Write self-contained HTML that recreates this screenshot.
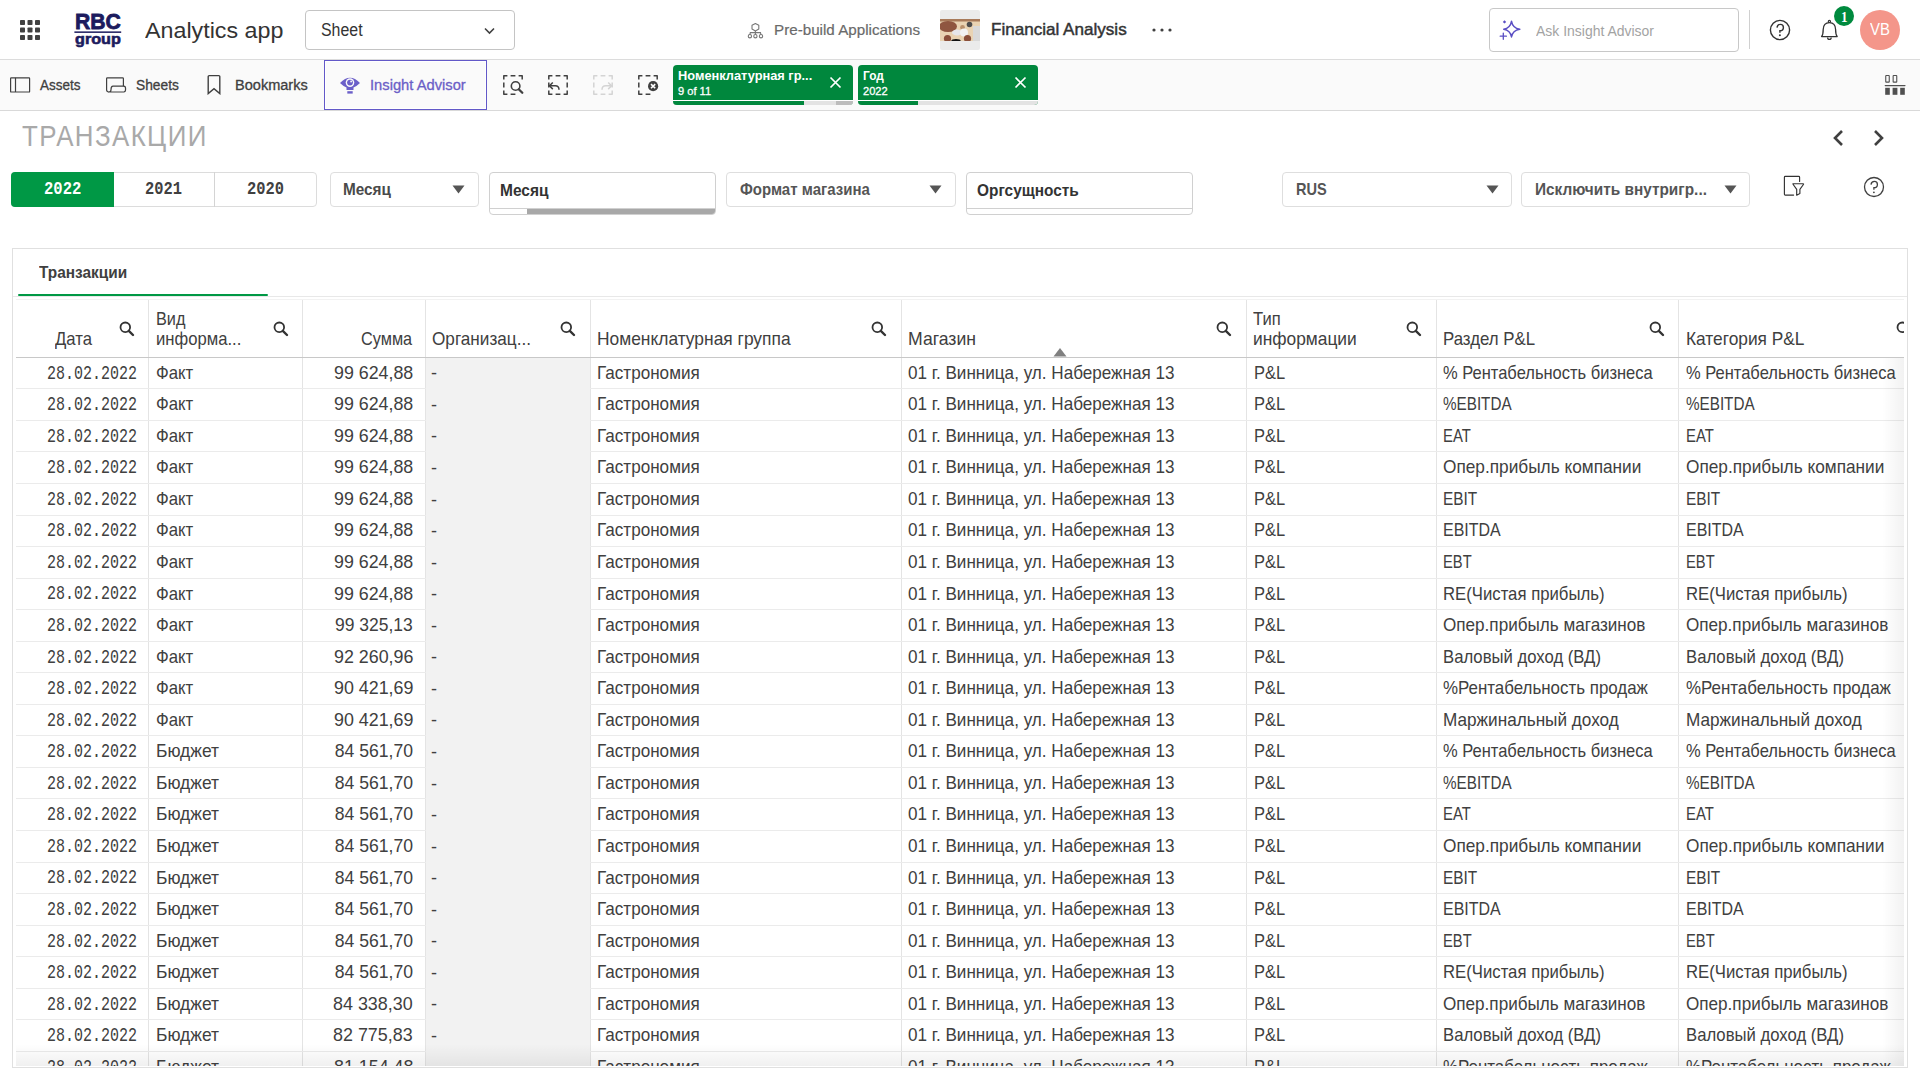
<!DOCTYPE html>
<html><head><meta charset="utf-8"><title>Analytics app</title><style>
*{box-sizing:border-box;margin:0;padding:0}
html,body{width:1920px;height:1080px;overflow:hidden;background:#fff;font-family:"Liberation Sans",sans-serif;color:#404040}
.a{position:absolute}
.t{position:absolute;line-height:1;white-space:nowrap}
</style></head><body>

<div class="a" style="left:0px;top:59px;width:1920px;height:1px;background:#dcdcdc"></div>
<svg class="a" style="left:20px;top:20px;" width="20" height="20" viewBox="0 0 20 20"><rect x="0.0" y="0.0" width="5" height="5" rx="0.8" fill="#404040"/><rect x="0.0" y="7.5" width="5" height="5" rx="0.8" fill="#404040"/><rect x="0.0" y="15.0" width="5" height="5" rx="0.8" fill="#404040"/><rect x="7.5" y="0.0" width="5" height="5" rx="0.8" fill="#404040"/><rect x="7.5" y="7.5" width="5" height="5" rx="0.8" fill="#404040"/><rect x="7.5" y="15.0" width="5" height="5" rx="0.8" fill="#404040"/><rect x="15.0" y="0.0" width="5" height="5" rx="0.8" fill="#404040"/><rect x="15.0" y="7.5" width="5" height="5" rx="0.8" fill="#404040"/><rect x="15.0" y="15.0" width="5" height="5" rx="0.8" fill="#404040"/></svg>
<div class="t" style="top:10.94px;font-size:21.22px;color:#1c1b5e;font-weight:bold;left:74.80px;transform:scaleX(0.9957);transform-origin:0 0;-webkit-text-stroke:0.8px #1c1b5e;">RBC</div>
<svg class="a" style="left:74px;top:30px;" width="48" height="4" viewBox="0 0 48 4"><rect x="0.4" y="1.4" width="46.8" height="1.5" fill="#1c1b5e"/></svg>
<div class="t" style="top:30.53px;font-size:15.20px;color:#1c1b5e;font-weight:bold;left:74.80px;transform:scaleX(1.0651);transform-origin:0 0;-webkit-text-stroke:0.6px #1c1b5e;">group</div>
<div class="t" style="top:20.25px;font-size:22.38px;color:#333;left:145.00px;transform:scaleX(1.0404);transform-origin:0 0;">Analytics app</div>
<div class="a" style="left:305px;top:10px;width:210px;height:40px;border:1px solid #c4c4c4;border-radius:4px;background:#fff"></div>
<div class="t" style="top:20.94px;font-size:18.02px;color:#333;left:320.60px;transform:scaleX(0.8828);transform-origin:0 0;">Sheet</div>
<svg class="a" style="left:484px;top:27px;" width="11" height="8" viewBox="0 0 11 8"><path d="M1 1.5 L5.5 6 L10 1.5" fill="none" stroke="#404040" stroke-width="1.6"/></svg>
<svg class="a" style="left:747px;top:23px;" width="18" height="16" viewBox="0 0 18 16"><path d="M8.4 0.5 L11.8 2.3 V6 L8.4 7.9 L5 6 V2.3 Z" fill="none" stroke="#777" stroke-width="1.1" stroke-linejoin="round"/><path d="M2.9 11.6 L3.3 9.6 H13.5 L13.9 11.6 M8.4 7.9 V11.6" fill="none" stroke="#777" stroke-width="1.1"/><circle cx="2.9" cy="13.2" r="1.65" fill="none" stroke="#777" stroke-width="1.1"/><circle cx="8.4" cy="13.2" r="1.65" fill="none" stroke="#777" stroke-width="1.1"/><circle cx="14" cy="13.2" r="1.65" fill="none" stroke="#777" stroke-width="1.1"/></svg>
<div class="t" style="top:22.03px;font-size:15.55px;color:#6a6a6a;left:773.90px;transform:scaleX(0.9766);transform-origin:0 0;-webkit-text-stroke:0.2px #6a6a6a;">Pre-build Applications</div>
<div class="a" style="left:940px;top:10px;width:40px;height:40px;background:#ebebeb;border-radius:2px"></div>
<svg class="a" style="left:940px;top:19px;" width="40" height="22" viewBox="0 0 40 22"><rect width="40" height="22" fill="#e9d3b3"/><rect width="40" height="2.5" fill="#a87a5a"/><ellipse cx="8" cy="7.5" rx="9" ry="5.5" fill="#8f5640"/><ellipse cx="17" cy="13.5" rx="5" ry="3" fill="#e6e6ea"/><circle cx="22.5" cy="8.5" r="2.4" fill="#b8906c"/><ellipse cx="24" cy="13.5" rx="4" ry="4" fill="#f2f2f2"/><circle cx="29.5" cy="5.5" r="2.8" fill="#4d4d4d"/><rect x="33" y="7" width="7" height="15" fill="#d9d9d9"/><circle cx="7.5" cy="19.5" r="3.6" fill="#8a4f3a"/><circle cx="27.5" cy="19.5" r="3.6" fill="#8a4f3a"/><ellipse cx="16" cy="21.6" rx="4.6" ry="1.6" fill="#111"/></svg>
<div class="t" style="top:21.38px;font-size:17.15px;color:#333;left:991.00px;transform:scaleX(0.9958);transform-origin:0 0;-webkit-text-stroke:0.45px #333;">Financial Analysis</div>
<svg class="a" style="left:1151px;top:27px;" width="22" height="6" viewBox="0 0 22 6"><circle cx="3" cy="3" r="1.6" fill="#404040"/><circle cx="11" cy="3" r="1.6" fill="#404040"/><circle cx="19" cy="3" r="1.6" fill="#404040"/></svg>
<div class="a" style="left:1489px;top:8px;width:250px;height:44px;border:1px solid #c8c8c8;border-radius:4px;background:#fff"></div>
<svg class="a" style="left:1498px;top:19px;" width="24" height="22" viewBox="0 0 24 22"><path d="M13.5 2.2 Q14.6 9.2 21.8 10.3 Q14.6 11.4 13.5 18 Q12.4 11.4 5.7 10.3 Q12.4 9.2 13.5 2.2 Z" fill="none" stroke="#5b4fc4" stroke-width="1.4" stroke-linejoin="round"/><path d="M2.2 17.2 H8.4 M5.3 14.1 V20.3" stroke="#5b4fc4" stroke-width="1.3" stroke-linecap="round"/><path d="M6.5 1.2 L8.2 2.9 L6.5 4.6 L4.8 2.9 Z" fill="#5b4fc4"/></svg>
<div class="t" style="top:23.28px;font-size:15.26px;color:#a3a3a3;left:1536.00px;transform:scaleX(0.9156);transform-origin:0 0;">Ask Insight Advisor</div>
<div class="a" style="left:1749px;top:10px;width:1px;height:39px;background:#d0d0d0"></div>
<svg class="a" style="left:1769px;top:19px;" width="22" height="22" viewBox="0 0 22 22"><circle cx="11" cy="11" r="9.6" fill="none" stroke="#333" stroke-width="1.4"/><path d="M8 8.6 Q8.4 5.4 11.4 5.4 Q14.4 5.4 14.4 8.4 Q14.4 11.6 10.9 11.7 V13.8" fill="none" stroke="#333" stroke-width="1.4"/><circle cx="10.9" cy="16.3" r="1" fill="#333"/></svg>
<svg class="a" style="left:1820px;top:19px;" width="19" height="22" viewBox="0 0 19 22"><circle cx="9.4" cy="2.4" r="1.1" fill="none" stroke="#333" stroke-width="1.2"/><path d="M9.4 3.6 Q3.4 3.6 3.2 10.5 Q3.2 15.5 1.6 17.6 H17.2 Q15.6 15.5 15.6 10.5 Q15.4 3.6 9.4 3.6 Z" fill="none" stroke="#333" stroke-width="1.3" stroke-linejoin="round"/><path d="M7.6 18.4 Q7.6 20.4 9.4 20.4 Q11.2 20.4 11.2 18.4" fill="none" stroke="#333" stroke-width="1.2"/></svg>
<div class="a" style="left:1834px;top:6px;width:20px;height:20px;background:#008a3e;border-radius:50%"></div>
<div class="t" style="top:9.72px;font-size:14.39px;color:#fff;font-weight:bold;font-family:'Liberation Serif',serif;left:1840.70px;transform:scaleX(0.9103);transform-origin:0 0;">1</div>
<div class="a" style="left:1860px;top:10px;width:40px;height:40px;background:#f4968a;border-radius:50%"></div>
<div class="t" style="top:21.69px;font-size:15.84px;color:#fff;left:1870.00px;transform:scaleX(0.9420);transform-origin:0 0;">VB</div>
<div class="a" style="left:0px;top:60px;width:1920px;height:50px;background:#fafafa"></div>
<div class="a" style="left:0px;top:110px;width:1920px;height:1px;background:#d9d9d9"></div>
<svg class="a" style="left:9px;top:76px;" width="22" height="18" viewBox="0 0 22 18"><rect x="1.6" y="1.8" width="19" height="14.2" rx="0.6" fill="none" stroke="#404040" stroke-width="1.2"/><path d="M6.5 1.8 V16" stroke="#404040" stroke-width="1.2"/></svg>
<div class="t" style="top:77.64px;font-size:14.24px;color:#404040;left:40.00px;transform:scaleX(0.9497);transform-origin:0 0;-webkit-text-stroke:0.3px #404040;">Assets</div>
<svg class="a" style="left:105px;top:76px;" width="22" height="18" viewBox="0 0 22 18"><path d="M3.8 16 Q1.6 16 1.6 13.8 V2.6 Q1.6 1.8 2.4 1.8 H17.6 Q18.4 1.8 18.4 2.6 V10.2" fill="none" stroke="#404040" stroke-width="1.2"/><path d="M3.8 16 Q6 16 6 13.8 Q6 10.2 8 10.2 H18.8 Q20.6 10.2 20.6 13 Q20.6 16 18.8 16 Z" fill="none" stroke="#404040" stroke-width="1.2" stroke-linejoin="round"/></svg>
<div class="t" style="top:77.64px;font-size:14.24px;color:#404040;left:136.00px;transform:scaleX(0.9668);transform-origin:0 0;-webkit-text-stroke:0.3px #404040;">Sheets</div>
<svg class="a" style="left:206px;top:74px;" width="16" height="21" viewBox="0 0 16 21"><path d="M2.2 19.6 V2.6 Q2.2 1.6 3.2 1.6 H12.8 Q13.8 1.6 13.8 2.6 V19.6 L8 14.6 Z" fill="none" stroke="#404040" stroke-width="1.4" stroke-linejoin="miter"/></svg>
<div class="t" style="top:77.64px;font-size:14.24px;color:#404040;left:234.70px;transform:scaleX(1.0218);transform-origin:0 0;-webkit-text-stroke:0.3px #404040;">Bookmarks</div>
<div class="a" style="left:324px;top:60px;width:163px;height:50px;border:1px solid #6258c8;box-shadow:inset 0 0 0 1px #fff;background:#fafafa"></div>
<svg class="a" style="left:339px;top:74px;" width="22" height="21" viewBox="0 0 22 21"><path d="M1 9 Q11 -1.5 21 9 Q18 12 14.5 13.6 V16 H7.5 V13.6 Q4 12 1 9 Z" fill="#6b5fc9"/><circle cx="11" cy="8.6" r="4.3" fill="#fafafa"/><circle cx="11" cy="8.6" r="2.9" fill="#6b5fc9"/><circle cx="12.1" cy="7.5" r="0.9" fill="#fafafa"/><rect x="8.3" y="17.2" width="5.4" height="2.4" fill="#6b5fc9"/></svg>
<div class="t" style="top:77.64px;font-size:14.24px;color:#6b5fc7;left:370.00px;transform:scaleX(1.0343);transform-origin:0 0;-webkit-text-stroke:0.3px #6b5fc7;">Insight Advisor</div>
<svg class="a" style="left:503px;top:75px;" width="22" height="22" viewBox="0 0 22 22"><path d="M0.8 4.4 V0.8 H4.4 M15.6 0.8 H19.2 V4.4 M4.4 19.2 H0.8 V15.6 M7.6 0.8 H12.4 M7.6 19.2 H12.4 M0.8 7.6 V12.4" fill="none" stroke="#404040" stroke-width="1.5" stroke-linecap="butt" stroke-linejoin="round"/><circle cx="12.6" cy="11" r="4.3" fill="none" stroke="#404040" stroke-width="1.6"/><path d="M15.7 14.2 L19.3 17.8" stroke="#404040" stroke-width="2.3" stroke-linecap="round"/></svg>
<svg class="a" style="left:548px;top:75px;" width="22" height="22" viewBox="0 0 22 22"><path d="M0.8 4.4 V0.8 H4.4 M15.6 0.8 H19.2 V4.4 M19.2 15.6 V19.2 H15.6 M4.4 19.2 H0.8 V15.6 M7.6 0.8 H12.4 M7.6 19.2 H12.4 M0.8 7.6 V12.4 M19.2 7.6 V12.4" fill="none" stroke="#404040" stroke-width="1.5" stroke-linecap="butt" stroke-linejoin="round"/><path d="M1.5 10.8 H7.3 Q11 10.8 11 14.8" fill="none" stroke="#404040" stroke-width="1.5"/><path d="M4.8 7.5 L1.5 10.8 L4.8 14.1" fill="none" stroke="#404040" stroke-width="1.5"/></svg>
<svg class="a" style="left:593px;top:75px;" width="22" height="22" viewBox="0 0 22 22"><path d="M0.8 4.4 V0.8 H4.4 M15.6 0.8 H19.2 V4.4 M19.2 15.6 V19.2 H15.6 M4.4 19.2 H0.8 V15.6 M7.6 0.8 H12.4 M7.6 19.2 H12.4 M0.8 7.6 V12.4 M19.2 7.6 V12.4" fill="none" stroke="#d4d4d4" stroke-width="1.5" stroke-linecap="butt" stroke-linejoin="round"/><path d="M18.5 10.8 H12.7 Q9 10.8 9 14.8" fill="none" stroke="#d4d4d4" stroke-width="1.5"/><path d="M15.2 7.5 L18.5 10.8 L15.2 14.1" fill="none" stroke="#d4d4d4" stroke-width="1.5"/></svg>
<svg class="a" style="left:638px;top:75px;" width="22" height="22" viewBox="0 0 22 22"><path d="M0.8 4.4 V0.8 H4.4 M15.6 0.8 H19.2 V4.4 M4.4 19.2 H0.8 V15.6 M7.6 0.8 H12.4 M7.6 19.2 H12.4 M0.8 7.6 V12.4" fill="none" stroke="#404040" stroke-width="1.5" stroke-linecap="butt" stroke-linejoin="round"/><circle cx="15.1" cy="11.2" r="5.1" fill="#404040"/><path d="M13 9.1 L17.2 13.3 M17.2 9.1 L13 13.3" stroke="#fff" stroke-width="1.6"/></svg>
<div class="a" style="left:673px;top:65px;width:180px;height:40px;background:#00873d;border-radius:4px;overflow:hidden"></div>
<div class="a" style="left:673px;top:101px;width:180px;height:4px;background:#e3e3e3;border-radius:0 0 4px 4px"></div>
<div class="a" style="left:836px;top:101px;width:17px;height:4px;background:#bdbdbd;border-radius:0 0 4px 0"></div>
<div class="a" style="left:673px;top:101px;width:131px;height:4px;background:#00873d;border-radius:0 0 0 4px"></div>
<div class="a" style="left:673px;top:100px;width:180px;height:1px;background:#fff"></div>
<div class="t" style="top:69.85px;font-size:12.94px;color:#fff;font-weight:bold;left:678.40px;transform:scaleX(0.9904);transform-origin:0 0;">Номенклатурная гр...</div>
<div class="t" style="top:84.76px;font-size:11.63px;color:#fff;left:678.40px;transform:scaleX(0.9554);transform-origin:0 0;-webkit-text-stroke:0.3px #fff;">9 of 11</div>
<svg class="a" style="left:829px;top:76px;" width="13" height="13" viewBox="0 0 13 13"><path d="M1.5 1.5 L11.5 11.5 M11.5 1.5 L1.5 11.5" stroke="#fff" stroke-width="1.7"/></svg>
<div class="a" style="left:858px;top:65px;width:180px;height:40px;background:#00873d;border-radius:4px;overflow:hidden"></div>
<div class="a" style="left:858px;top:101px;width:180px;height:4px;background:#e3e3e3;border-radius:0 0 4px 4px"></div>
<div class="a" style="left:858px;top:101px;width:60px;height:4px;background:#00873d;border-radius:0 0 0 4px"></div>
<div class="a" style="left:858px;top:100px;width:180px;height:1px;background:#fff"></div>
<div class="t" style="top:69.85px;font-size:12.94px;color:#fff;font-weight:bold;left:863.40px;transform:scaleX(0.9193);transform-origin:0 0;">Год</div>
<div class="t" style="top:84.76px;font-size:11.63px;color:#fff;left:863.40px;transform:scaleX(0.9546);transform-origin:0 0;-webkit-text-stroke:0.3px #fff;">2022</div>
<svg class="a" style="left:1014px;top:76px;" width="13" height="13" viewBox="0 0 13 13"><path d="M1.5 1.5 L11.5 11.5 M11.5 1.5 L1.5 11.5" stroke="#fff" stroke-width="1.7"/></svg>
<svg class="a" style="left:1884px;top:74px;" width="22" height="22" viewBox="0 0 22 22"><rect x="1.75" y="1.55" width="3.5" height="6.6" rx="0.5" fill="none" stroke="#505050" stroke-width="1.1"/><rect x="9.15" y="1.55" width="3.6" height="6.6" rx="0.5" fill="none" stroke="#505050" stroke-width="1.1"/><path d="M1.2 11.6 H21" stroke="#505050" stroke-width="1.1" stroke-linecap="round"/><rect x="1.2" y="13.8" width="4.6" height="7" fill="#505050"/><rect x="8.6" y="13.8" width="4.8" height="7" fill="#505050"/><rect x="16.2" y="13.8" width="4.6" height="7" fill="#505050"/></svg>
<div class="t" style="top:120.85px;font-size:29.94px;color:#a9a9a9;letter-spacing:1.6px;left:22.00px;transform:scaleX(0.8657);transform-origin:0 0;">ТРАНЗАКЦИИ</div>
<svg class="a" style="left:1831px;top:129px;" width="14" height="18" viewBox="0 0 14 18"><path d="M11 2 L4 9 L11 16" fill="none" stroke="#404040" stroke-width="2.6"/></svg>
<svg class="a" style="left:1872px;top:129px;" width="14" height="18" viewBox="0 0 14 18"><path d="M3 2 L10 9 L3 16" fill="none" stroke="#404040" stroke-width="2.6"/></svg>
<div class="a" style="left:11px;top:172px;width:306px;height:35px;border:1px solid #dcdcdc;border-radius:4px;background:#fff"></div>
<div class="a" style="left:11px;top:172px;width:103px;height:35px;background:#009845;border-radius:4px 0 0 4px"></div>
<div class="a" style="left:214px;top:172px;width:1px;height:35px;background:#d4d4d4"></div>
<div class="t" style="top:181.43px;font-size:17.45px;color:#fff;font-weight:bold;font-family:'Liberation Mono',monospace;left:43.50px;transform:scaleX(0.8907);transform-origin:0 0;">2022</div>
<div class="t" style="top:181.43px;font-size:17.45px;color:#404040;font-weight:bold;font-family:'Liberation Mono',monospace;left:145.00px;transform:scaleX(0.8836);transform-origin:0 0;">2021</div>
<div class="t" style="top:181.43px;font-size:17.45px;color:#404040;font-weight:bold;font-family:'Liberation Mono',monospace;left:247.00px;transform:scaleX(0.8836);transform-origin:0 0;">2020</div>
<div class="a" style="left:330px;top:172px;width:149px;height:35px;border:1px solid #dedede;border-radius:4px;background:#fff"></div>
<div class="t" style="top:180.80px;font-size:17.01px;color:#4a4a4a;font-weight:bold;left:343.00px;transform:scaleX(0.9014);transform-origin:0 0;">Месяц</div>
<svg class="a" style="left:452px;top:185px;" width="13" height="9" viewBox="0 0 13 9"><path d="M0.5 0.5 H12.5 L6.5 8.5 Z" fill="#555"/></svg>
<div class="a" style="left:489px;top:172px;width:227px;height:43px;border:1px solid #d0d0d0;border-radius:4px;background:#fff"></div>
<div class="a" style="left:490px;top:207.5px;width:225px;height:1.0px;background:#d0d0d0"></div>
<div class="a" style="left:527px;top:208.5px;width:188px;height:5.0px;background:#a8a8a8;border-radius:0 0 3px 0"></div>
<div class="t" style="top:182.30px;font-size:17.01px;color:#333;font-weight:bold;left:500.40px;transform:scaleX(0.9108);transform-origin:0 0;">Месяц</div>
<div class="a" style="left:726px;top:172px;width:230px;height:35px;border:1px solid #dedede;border-radius:4px;background:#fff"></div>
<div class="t" style="top:181.10px;font-size:17.01px;color:#555;font-weight:bold;left:739.50px;transform:scaleX(0.8829);transform-origin:0 0;">Формат магазина</div>
<svg class="a" style="left:929px;top:185px;" width="13" height="9" viewBox="0 0 13 9"><path d="M0.5 0.5 H12.5 L6.5 8.5 Z" fill="#555"/></svg>
<div class="a" style="left:966px;top:172px;width:227px;height:43px;border:1px solid #d0d0d0;border-radius:4px;background:#fff"></div>
<div class="a" style="left:967px;top:207.5px;width:225px;height:1.0px;background:#d0d0d0"></div>
<div class="t" style="top:182.35px;font-size:17.01px;color:#333;font-weight:bold;left:977.00px;transform:scaleX(0.9055);transform-origin:0 0;">Оргсущность</div>
<div class="a" style="left:1282px;top:172px;width:230px;height:35px;border:1px solid #dedede;border-radius:4px;background:#fff"></div>
<div class="t" style="top:181.10px;font-size:17.01px;color:#555;font-weight:bold;left:1296.25px;transform:scaleX(0.8571);transform-origin:0 0;">RUS</div>
<svg class="a" style="left:1486px;top:185px;" width="13" height="9" viewBox="0 0 13 9"><path d="M0.5 0.5 H12.5 L6.5 8.5 Z" fill="#555"/></svg>
<div class="a" style="left:1521px;top:172px;width:229px;height:35px;border:1px solid #dedede;border-radius:4px;background:#fff"></div>
<div class="t" style="top:181.10px;font-size:17.01px;color:#555;font-weight:bold;left:1535.00px;transform:scaleX(0.9047);transform-origin:0 0;">Исключить внутригр...</div>
<svg class="a" style="left:1724px;top:185px;" width="13" height="9" viewBox="0 0 13 9"><path d="M0.5 0.5 H12.5 L6.5 8.5 Z" fill="#555"/></svg>
<svg class="a" style="left:1782px;top:174px;" width="24" height="24" viewBox="0 0 24 24"><path d="M17.6 7.5 V3.2 Q17.6 2.3 16.7 2.3 H3.3 Q2.4 2.3 2.4 3.2 V20.2 Q2.4 21.1 3.3 21.1 H11.6" fill="none" stroke="#333" stroke-width="1.15" stroke-linecap="round"/><path d="M11 9.7 H21.1 Q21.9 9.8 21.4 10.5 L17.9 15.3 V19.6 L14.7 21.2 V15.3 L11.2 10.5 Q10.7 9.8 11 9.7 Z" fill="#fff" stroke="#333" stroke-width="1.15" stroke-linejoin="round"/></svg>
<svg class="a" style="left:1863px;top:176px;" width="22" height="22" viewBox="0 0 22 22"><circle cx="11" cy="11" r="9.5" fill="none" stroke="#404040" stroke-width="1.3"/><path d="M8 8.6 Q8.4 5.4 11.4 5.4 Q14.4 5.4 14.4 8.4 Q14.4 11.6 10.9 11.7 V13.8" fill="none" stroke="#404040" stroke-width="1.3"/><circle cx="10.9" cy="16.3" r="0.9" fill="#404040"/></svg>
<div class="a" style="left:12px;top:248px;width:1896px;height:820px;border:1px solid #e0e0e0;background:#fff"></div>
<div class="t" style="top:264.10px;font-size:16.42px;color:#404040;font-weight:bold;left:39.20px;transform:scaleX(0.9381);transform-origin:0 0;">Транзакции</div>
<div class="a" style="left:13px;top:296px;width:1894px;height:1px;background:#e8e8e8"></div>
<div class="a" style="left:18px;top:294px;width:250px;height:2px;background:#009845;border-radius:1px"></div>
<div class="a" style="left:16px;top:299px;width:1888px;height:1px;background:#f2f2f2"></div>
<div class="a" style="left:148px;top:300px;width:1px;height:766px;background:#e4e4e4"></div>
<div class="a" style="left:302px;top:300px;width:1px;height:766px;background:#e4e4e4"></div>
<div class="a" style="left:425px;top:300px;width:1px;height:766px;background:#e4e4e4"></div>
<div class="a" style="left:590px;top:300px;width:1px;height:766px;background:#e4e4e4"></div>
<div class="a" style="left:901px;top:300px;width:1px;height:766px;background:#e4e4e4"></div>
<div class="a" style="left:1246px;top:300px;width:1px;height:766px;background:#e4e4e4"></div>
<div class="a" style="left:1436px;top:300px;width:1px;height:766px;background:#e4e4e4"></div>
<div class="a" style="left:1678px;top:300px;width:1px;height:766px;background:#e4e4e4"></div>
<div class="a" style="left:16px;top:357px;width:1888px;height:1px;background:#c8c8c8"></div>
<div class="a" style="left:16px;top:388.3px;width:1888px;height:1.0px;background:#ebebeb"></div>
<div class="a" style="left:16px;top:419.85px;width:1888px;height:1.0px;background:#ebebeb"></div>
<div class="a" style="left:16px;top:451.4px;width:1888px;height:1.0px;background:#ebebeb"></div>
<div class="a" style="left:16px;top:482.95px;width:1888px;height:1.0px;background:#ebebeb"></div>
<div class="a" style="left:16px;top:514.5px;width:1888px;height:1.0px;background:#ebebeb"></div>
<div class="a" style="left:16px;top:546.05px;width:1888px;height:1.0px;background:#ebebeb"></div>
<div class="a" style="left:16px;top:577.6px;width:1888px;height:1.0px;background:#ebebeb"></div>
<div class="a" style="left:16px;top:609.15px;width:1888px;height:1.0px;background:#ebebeb"></div>
<div class="a" style="left:16px;top:640.7px;width:1888px;height:1.0px;background:#ebebeb"></div>
<div class="a" style="left:16px;top:672.25px;width:1888px;height:1.0px;background:#ebebeb"></div>
<div class="a" style="left:16px;top:703.8px;width:1888px;height:1.0px;background:#ebebeb"></div>
<div class="a" style="left:16px;top:735.35px;width:1888px;height:1.0px;background:#ebebeb"></div>
<div class="a" style="left:16px;top:766.9px;width:1888px;height:1.0px;background:#ebebeb"></div>
<div class="a" style="left:16px;top:798.45px;width:1888px;height:1.0px;background:#ebebeb"></div>
<div class="a" style="left:16px;top:830.0px;width:1888px;height:1.0px;background:#ebebeb"></div>
<div class="a" style="left:16px;top:861.55px;width:1888px;height:1.0px;background:#ebebeb"></div>
<div class="a" style="left:16px;top:893.1px;width:1888px;height:1.0px;background:#ebebeb"></div>
<div class="a" style="left:16px;top:924.65px;width:1888px;height:1.0px;background:#ebebeb"></div>
<div class="a" style="left:16px;top:956.2px;width:1888px;height:1.0px;background:#ebebeb"></div>
<div class="a" style="left:16px;top:987.75px;width:1888px;height:1.0px;background:#ebebeb"></div>
<div class="a" style="left:16px;top:1019.3px;width:1888px;height:1.0px;background:#ebebeb"></div>
<div class="a" style="left:16px;top:1050.85px;width:1888px;height:1.0px;background:#ebebeb"></div>
<div class="a" style="left:426px;top:358px;width:164px;height:708px;background:#f2f2f2"></div>
<div class="t" style="top:330.59px;font-size:17.73px;color:#404040;left:55.00px;transform:scaleX(0.9427);transform-origin:0 0;">Дата</div>
<svg class="a" style="left:119px;top:321px;" width="16" height="17" viewBox="0 0 16 17"><circle cx="6.3" cy="6.3" r="4.8" fill="none" stroke="#333" stroke-width="1.8"/><path d="M9.8 9.8 L14 14" stroke="#333" stroke-width="2.4" stroke-linecap="round"/></svg>
<div class="t" style="top:310.59px;font-size:17.73px;color:#404040;left:155.80px;transform:scaleX(0.9183);transform-origin:0 0;">Вид</div>
<div class="t" style="top:330.59px;font-size:17.73px;color:#404040;left:155.80px;transform:scaleX(0.9398);transform-origin:0 0;">информа...</div>
<svg class="a" style="left:273px;top:321px;" width="16" height="17" viewBox="0 0 16 17"><circle cx="6.3" cy="6.3" r="4.8" fill="none" stroke="#333" stroke-width="1.8"/><path d="M9.8 9.8 L14 14" stroke="#333" stroke-width="2.4" stroke-linecap="round"/></svg>
<div class="t" style="top:330.59px;font-size:17.73px;color:#404040;left:360.80px;transform:scaleX(0.9184);transform-origin:0 0;">Сумма</div>
<div class="t" style="top:330.59px;font-size:17.73px;color:#404040;left:431.70px;transform:scaleX(0.9692);transform-origin:0 0;">Организац...</div>
<svg class="a" style="left:560px;top:321px;" width="16" height="17" viewBox="0 0 16 17"><circle cx="6.3" cy="6.3" r="4.8" fill="none" stroke="#333" stroke-width="1.8"/><path d="M9.8 9.8 L14 14" stroke="#333" stroke-width="2.4" stroke-linecap="round"/></svg>
<div class="t" style="top:330.59px;font-size:17.73px;color:#404040;left:597.00px;transform:scaleX(0.9814);transform-origin:0 0;">Номенклатурная группа</div>
<svg class="a" style="left:871px;top:321px;" width="16" height="17" viewBox="0 0 16 17"><circle cx="6.3" cy="6.3" r="4.8" fill="none" stroke="#333" stroke-width="1.8"/><path d="M9.8 9.8 L14 14" stroke="#333" stroke-width="2.4" stroke-linecap="round"/></svg>
<div class="t" style="top:330.59px;font-size:17.73px;color:#404040;left:907.50px;transform:scaleX(0.9945);transform-origin:0 0;">Магазин</div>
<svg class="a" style="left:1216px;top:321px;" width="16" height="17" viewBox="0 0 16 17"><circle cx="6.3" cy="6.3" r="4.8" fill="none" stroke="#333" stroke-width="1.8"/><path d="M9.8 9.8 L14 14" stroke="#333" stroke-width="2.4" stroke-linecap="round"/></svg>
<svg class="a" style="left:1053px;top:347px;" width="14" height="10" viewBox="0 0 14 10"><path d="M0.5 9.5 L7 1 L13.5 9.5 Z" fill="#808080"/></svg>
<div class="t" style="top:310.59px;font-size:17.73px;color:#404040;left:1253.10px;transform:scaleX(0.9356);transform-origin:0 0;">Тип</div>
<div class="t" style="top:330.59px;font-size:17.73px;color:#404040;left:1253.10px;transform:scaleX(0.9792);transform-origin:0 0;">информации</div>
<svg class="a" style="left:1406px;top:321px;" width="16" height="17" viewBox="0 0 16 17"><circle cx="6.3" cy="6.3" r="4.8" fill="none" stroke="#333" stroke-width="1.8"/><path d="M9.8 9.8 L14 14" stroke="#333" stroke-width="2.4" stroke-linecap="round"/></svg>
<div class="t" style="top:330.59px;font-size:17.73px;color:#404040;left:1442.50px;transform:scaleX(0.9495);transform-origin:0 0;">Раздел P&amp;L</div>
<svg class="a" style="left:1649px;top:321px;" width="16" height="17" viewBox="0 0 16 17"><circle cx="6.3" cy="6.3" r="4.8" fill="none" stroke="#333" stroke-width="1.8"/><path d="M9.8 9.8 L14 14" stroke="#333" stroke-width="2.4" stroke-linecap="round"/></svg>
<div class="t" style="top:330.59px;font-size:17.73px;color:#404040;left:1685.50px;transform:scaleX(0.9771);transform-origin:0 0;">Категория P&amp;L</div>
<svg class="a" style="left:1896px;top:321px;" width="8" height="17" viewBox="0 0 8 17"><circle cx="6.3" cy="6.3" r="4.8" fill="none" stroke="#333" stroke-width="1.8"/></svg>
<div class="a" style="left:0;top:358px;width:1904px;height:708px;overflow:hidden">
<div class="a" style="left:0;top:-358px;width:1904px;height:1080px">
<div class="t" style="top:364.60px;font-size:19.58px;color:#404040;font-family:'Liberation Mono',monospace;left:46.70px;transform:scaleX(0.7660);transform-origin:0 0;">28.02.2022</div>
<div class="t" style="top:364.71px;font-size:17.59px;color:#404040;left:156.00px;transform:scaleX(0.9534);transform-origin:0 0;">Факт</div>
<div class="t" style="top:364.71px;font-size:17.59px;color:#404040;left:333.70px;transform:scaleX(1.0134);transform-origin:0 0;">99 624,88</div>
<div class="t" style="top:364.36px;font-size:18.00px;color:#404040;left:431.00px;">-</div>
<div class="t" style="top:364.71px;font-size:17.59px;color:#404040;left:597.00px;transform:scaleX(0.9723);transform-origin:0 0;">Гастрономия</div>
<div class="t" style="top:364.71px;font-size:17.59px;color:#404040;left:907.50px;transform:scaleX(0.9729);transform-origin:0 0;">01 г. Винница, ул. Набережная 13</div>
<div class="t" style="top:364.71px;font-size:17.59px;color:#404040;left:1253.80px;transform:scaleX(0.9383);transform-origin:0 0;">P&amp;L</div>
<div class="t" style="top:364.71px;font-size:17.59px;color:#404040;left:1442.80px;transform:scaleX(0.9386);transform-origin:0 0;">% Рентабельность бизнеса</div>
<div class="t" style="top:364.71px;font-size:17.59px;color:#404040;left:1685.80px;transform:scaleX(0.9386);transform-origin:0 0;">% Рентабельность бизнеса</div>
<div class="t" style="top:396.15px;font-size:19.58px;color:#404040;font-family:'Liberation Mono',monospace;left:46.70px;transform:scaleX(0.7660);transform-origin:0 0;">28.02.2022</div>
<div class="t" style="top:396.26px;font-size:17.59px;color:#404040;left:156.00px;transform:scaleX(0.9534);transform-origin:0 0;">Факт</div>
<div class="t" style="top:396.26px;font-size:17.59px;color:#404040;left:333.70px;transform:scaleX(1.0134);transform-origin:0 0;">99 624,88</div>
<div class="t" style="top:395.91px;font-size:18.00px;color:#404040;left:431.00px;">-</div>
<div class="t" style="top:396.26px;font-size:17.59px;color:#404040;left:597.00px;transform:scaleX(0.9723);transform-origin:0 0;">Гастрономия</div>
<div class="t" style="top:396.26px;font-size:17.59px;color:#404040;left:907.50px;transform:scaleX(0.9729);transform-origin:0 0;">01 г. Винница, ул. Набережная 13</div>
<div class="t" style="top:396.26px;font-size:17.59px;color:#404040;left:1253.80px;transform:scaleX(0.9383);transform-origin:0 0;">P&amp;L</div>
<div class="t" style="top:396.26px;font-size:17.59px;color:#404040;left:1442.80px;transform:scaleX(0.8670);transform-origin:0 0;">%EBITDA</div>
<div class="t" style="top:396.26px;font-size:17.59px;color:#404040;left:1685.80px;transform:scaleX(0.8670);transform-origin:0 0;">%EBITDA</div>
<div class="t" style="top:427.70px;font-size:19.58px;color:#404040;font-family:'Liberation Mono',monospace;left:46.70px;transform:scaleX(0.7660);transform-origin:0 0;">28.02.2022</div>
<div class="t" style="top:427.81px;font-size:17.59px;color:#404040;left:156.00px;transform:scaleX(0.9534);transform-origin:0 0;">Факт</div>
<div class="t" style="top:427.81px;font-size:17.59px;color:#404040;left:333.70px;transform:scaleX(1.0134);transform-origin:0 0;">99 624,88</div>
<div class="t" style="top:427.46px;font-size:18.00px;color:#404040;left:431.00px;">-</div>
<div class="t" style="top:427.81px;font-size:17.59px;color:#404040;left:597.00px;transform:scaleX(0.9723);transform-origin:0 0;">Гастрономия</div>
<div class="t" style="top:427.81px;font-size:17.59px;color:#404040;left:907.50px;transform:scaleX(0.9729);transform-origin:0 0;">01 г. Винница, ул. Набережная 13</div>
<div class="t" style="top:427.81px;font-size:17.59px;color:#404040;left:1253.80px;transform:scaleX(0.9383);transform-origin:0 0;">P&amp;L</div>
<div class="t" style="top:427.81px;font-size:17.59px;color:#404040;left:1442.80px;transform:scaleX(0.8456);transform-origin:0 0;">EAT</div>
<div class="t" style="top:427.81px;font-size:17.59px;color:#404040;left:1685.80px;transform:scaleX(0.8456);transform-origin:0 0;">EAT</div>
<div class="t" style="top:459.25px;font-size:19.58px;color:#404040;font-family:'Liberation Mono',monospace;left:46.70px;transform:scaleX(0.7660);transform-origin:0 0;">28.02.2022</div>
<div class="t" style="top:459.36px;font-size:17.59px;color:#404040;left:156.00px;transform:scaleX(0.9534);transform-origin:0 0;">Факт</div>
<div class="t" style="top:459.36px;font-size:17.59px;color:#404040;left:333.70px;transform:scaleX(1.0134);transform-origin:0 0;">99 624,88</div>
<div class="t" style="top:459.01px;font-size:18.00px;color:#404040;left:431.00px;">-</div>
<div class="t" style="top:459.36px;font-size:17.59px;color:#404040;left:597.00px;transform:scaleX(0.9723);transform-origin:0 0;">Гастрономия</div>
<div class="t" style="top:459.36px;font-size:17.59px;color:#404040;left:907.50px;transform:scaleX(0.9729);transform-origin:0 0;">01 г. Винница, ул. Набережная 13</div>
<div class="t" style="top:459.36px;font-size:17.59px;color:#404040;left:1253.80px;transform:scaleX(0.9383);transform-origin:0 0;">P&amp;L</div>
<div class="t" style="top:459.36px;font-size:17.59px;color:#404040;left:1442.80px;transform:scaleX(0.9815);transform-origin:0 0;">Опер.прибыль компании</div>
<div class="t" style="top:459.36px;font-size:17.59px;color:#404040;left:1685.80px;transform:scaleX(0.9815);transform-origin:0 0;">Опер.прибыль компании</div>
<div class="t" style="top:490.80px;font-size:19.58px;color:#404040;font-family:'Liberation Mono',monospace;left:46.70px;transform:scaleX(0.7660);transform-origin:0 0;">28.02.2022</div>
<div class="t" style="top:490.91px;font-size:17.59px;color:#404040;left:156.00px;transform:scaleX(0.9534);transform-origin:0 0;">Факт</div>
<div class="t" style="top:490.91px;font-size:17.59px;color:#404040;left:333.70px;transform:scaleX(1.0134);transform-origin:0 0;">99 624,88</div>
<div class="t" style="top:490.56px;font-size:18.00px;color:#404040;left:431.00px;">-</div>
<div class="t" style="top:490.91px;font-size:17.59px;color:#404040;left:597.00px;transform:scaleX(0.9723);transform-origin:0 0;">Гастрономия</div>
<div class="t" style="top:490.91px;font-size:17.59px;color:#404040;left:907.50px;transform:scaleX(0.9729);transform-origin:0 0;">01 г. Винница, ул. Набережная 13</div>
<div class="t" style="top:490.91px;font-size:17.59px;color:#404040;left:1253.80px;transform:scaleX(0.9383);transform-origin:0 0;">P&amp;L</div>
<div class="t" style="top:490.91px;font-size:17.59px;color:#404040;left:1442.80px;transform:scaleX(0.8767);transform-origin:0 0;">EBIT</div>
<div class="t" style="top:490.91px;font-size:17.59px;color:#404040;left:1685.80px;transform:scaleX(0.8767);transform-origin:0 0;">EBIT</div>
<div class="t" style="top:522.35px;font-size:19.58px;color:#404040;font-family:'Liberation Mono',monospace;left:46.70px;transform:scaleX(0.7660);transform-origin:0 0;">28.02.2022</div>
<div class="t" style="top:522.46px;font-size:17.59px;color:#404040;left:156.00px;transform:scaleX(0.9534);transform-origin:0 0;">Факт</div>
<div class="t" style="top:522.46px;font-size:17.59px;color:#404040;left:333.70px;transform:scaleX(1.0134);transform-origin:0 0;">99 624,88</div>
<div class="t" style="top:522.11px;font-size:18.00px;color:#404040;left:431.00px;">-</div>
<div class="t" style="top:522.46px;font-size:17.59px;color:#404040;left:597.00px;transform:scaleX(0.9723);transform-origin:0 0;">Гастрономия</div>
<div class="t" style="top:522.46px;font-size:17.59px;color:#404040;left:907.50px;transform:scaleX(0.9729);transform-origin:0 0;">01 г. Винница, ул. Набережная 13</div>
<div class="t" style="top:522.46px;font-size:17.59px;color:#404040;left:1253.80px;transform:scaleX(0.9383);transform-origin:0 0;">P&amp;L</div>
<div class="t" style="top:522.46px;font-size:17.59px;color:#404040;left:1442.80px;transform:scaleX(0.9087);transform-origin:0 0;">EBITDA</div>
<div class="t" style="top:522.46px;font-size:17.59px;color:#404040;left:1685.80px;transform:scaleX(0.9087);transform-origin:0 0;">EBITDA</div>
<div class="t" style="top:553.90px;font-size:19.58px;color:#404040;font-family:'Liberation Mono',monospace;left:46.70px;transform:scaleX(0.7660);transform-origin:0 0;">28.02.2022</div>
<div class="t" style="top:554.01px;font-size:17.59px;color:#404040;left:156.00px;transform:scaleX(0.9534);transform-origin:0 0;">Факт</div>
<div class="t" style="top:554.01px;font-size:17.59px;color:#404040;left:333.70px;transform:scaleX(1.0134);transform-origin:0 0;">99 624,88</div>
<div class="t" style="top:553.66px;font-size:18.00px;color:#404040;left:431.00px;">-</div>
<div class="t" style="top:554.01px;font-size:17.59px;color:#404040;left:597.00px;transform:scaleX(0.9723);transform-origin:0 0;">Гастрономия</div>
<div class="t" style="top:554.01px;font-size:17.59px;color:#404040;left:907.50px;transform:scaleX(0.9729);transform-origin:0 0;">01 г. Винница, ул. Набережная 13</div>
<div class="t" style="top:554.01px;font-size:17.59px;color:#404040;left:1253.80px;transform:scaleX(0.9383);transform-origin:0 0;">P&amp;L</div>
<div class="t" style="top:554.01px;font-size:17.59px;color:#404040;left:1442.80px;transform:scaleX(0.8380);transform-origin:0 0;">EBT</div>
<div class="t" style="top:554.01px;font-size:17.59px;color:#404040;left:1685.80px;transform:scaleX(0.8380);transform-origin:0 0;">EBT</div>
<div class="t" style="top:585.45px;font-size:19.58px;color:#404040;font-family:'Liberation Mono',monospace;left:46.70px;transform:scaleX(0.7660);transform-origin:0 0;">28.02.2022</div>
<div class="t" style="top:585.56px;font-size:17.59px;color:#404040;left:156.00px;transform:scaleX(0.9534);transform-origin:0 0;">Факт</div>
<div class="t" style="top:585.56px;font-size:17.59px;color:#404040;left:333.70px;transform:scaleX(1.0134);transform-origin:0 0;">99 624,88</div>
<div class="t" style="top:585.21px;font-size:18.00px;color:#404040;left:431.00px;">-</div>
<div class="t" style="top:585.56px;font-size:17.59px;color:#404040;left:597.00px;transform:scaleX(0.9723);transform-origin:0 0;">Гастрономия</div>
<div class="t" style="top:585.56px;font-size:17.59px;color:#404040;left:907.50px;transform:scaleX(0.9729);transform-origin:0 0;">01 г. Винница, ул. Набережная 13</div>
<div class="t" style="top:585.56px;font-size:17.59px;color:#404040;left:1253.80px;transform:scaleX(0.9383);transform-origin:0 0;">P&amp;L</div>
<div class="t" style="top:585.56px;font-size:17.59px;color:#404040;left:1442.80px;transform:scaleX(0.9514);transform-origin:0 0;">RE(Чистая прибыль)</div>
<div class="t" style="top:585.56px;font-size:17.59px;color:#404040;left:1685.80px;transform:scaleX(0.9514);transform-origin:0 0;">RE(Чистая прибыль)</div>
<div class="t" style="top:617.00px;font-size:19.58px;color:#404040;font-family:'Liberation Mono',monospace;left:46.70px;transform:scaleX(0.7660);transform-origin:0 0;">28.02.2022</div>
<div class="t" style="top:617.11px;font-size:17.59px;color:#404040;left:156.00px;transform:scaleX(0.9534);transform-origin:0 0;">Факт</div>
<div class="t" style="top:617.11px;font-size:17.59px;color:#404040;left:335.20px;transform:scaleX(0.9942);transform-origin:0 0;">99 325,13</div>
<div class="t" style="top:616.76px;font-size:18.00px;color:#404040;left:431.00px;">-</div>
<div class="t" style="top:617.11px;font-size:17.59px;color:#404040;left:597.00px;transform:scaleX(0.9723);transform-origin:0 0;">Гастрономия</div>
<div class="t" style="top:617.11px;font-size:17.59px;color:#404040;left:907.50px;transform:scaleX(0.9729);transform-origin:0 0;">01 г. Винница, ул. Набережная 13</div>
<div class="t" style="top:617.11px;font-size:17.59px;color:#404040;left:1253.80px;transform:scaleX(0.9383);transform-origin:0 0;">P&amp;L</div>
<div class="t" style="top:617.11px;font-size:17.59px;color:#404040;left:1442.80px;transform:scaleX(0.9736);transform-origin:0 0;">Опер.прибыль магазинов</div>
<div class="t" style="top:617.11px;font-size:17.59px;color:#404040;left:1685.80px;transform:scaleX(0.9736);transform-origin:0 0;">Опер.прибыль магазинов</div>
<div class="t" style="top:648.55px;font-size:19.58px;color:#404040;font-family:'Liberation Mono',monospace;left:46.70px;transform:scaleX(0.7660);transform-origin:0 0;">28.02.2022</div>
<div class="t" style="top:648.66px;font-size:17.59px;color:#404040;left:156.00px;transform:scaleX(0.9534);transform-origin:0 0;">Факт</div>
<div class="t" style="top:648.66px;font-size:17.59px;color:#404040;left:333.50px;transform:scaleX(1.0160);transform-origin:0 0;">92 260,96</div>
<div class="t" style="top:648.31px;font-size:18.00px;color:#404040;left:431.00px;">-</div>
<div class="t" style="top:648.66px;font-size:17.59px;color:#404040;left:597.00px;transform:scaleX(0.9723);transform-origin:0 0;">Гастрономия</div>
<div class="t" style="top:648.66px;font-size:17.59px;color:#404040;left:907.50px;transform:scaleX(0.9729);transform-origin:0 0;">01 г. Винница, ул. Набережная 13</div>
<div class="t" style="top:648.66px;font-size:17.59px;color:#404040;left:1253.80px;transform:scaleX(0.9383);transform-origin:0 0;">P&amp;L</div>
<div class="t" style="top:648.66px;font-size:17.59px;color:#404040;left:1442.80px;transform:scaleX(0.9497);transform-origin:0 0;">Валовый доход (ВД)</div>
<div class="t" style="top:648.66px;font-size:17.59px;color:#404040;left:1685.80px;transform:scaleX(0.9497);transform-origin:0 0;">Валовый доход (ВД)</div>
<div class="t" style="top:680.10px;font-size:19.58px;color:#404040;font-family:'Liberation Mono',monospace;left:46.70px;transform:scaleX(0.7660);transform-origin:0 0;">28.02.2022</div>
<div class="t" style="top:680.21px;font-size:17.59px;color:#404040;left:156.00px;transform:scaleX(0.9534);transform-origin:0 0;">Факт</div>
<div class="t" style="top:680.21px;font-size:17.59px;color:#404040;left:333.50px;transform:scaleX(1.0160);transform-origin:0 0;">90 421,69</div>
<div class="t" style="top:679.86px;font-size:18.00px;color:#404040;left:431.00px;">-</div>
<div class="t" style="top:680.21px;font-size:17.59px;color:#404040;left:597.00px;transform:scaleX(0.9723);transform-origin:0 0;">Гастрономия</div>
<div class="t" style="top:680.21px;font-size:17.59px;color:#404040;left:907.50px;transform:scaleX(0.9729);transform-origin:0 0;">01 г. Винница, ул. Набережная 13</div>
<div class="t" style="top:680.21px;font-size:17.59px;color:#404040;left:1253.80px;transform:scaleX(0.9383);transform-origin:0 0;">P&amp;L</div>
<div class="t" style="top:680.21px;font-size:17.59px;color:#404040;left:1442.80px;transform:scaleX(0.9619);transform-origin:0 0;">%Рентабельность продаж</div>
<div class="t" style="top:680.21px;font-size:17.59px;color:#404040;left:1685.80px;transform:scaleX(0.9619);transform-origin:0 0;">%Рентабельность продаж</div>
<div class="t" style="top:711.65px;font-size:19.58px;color:#404040;font-family:'Liberation Mono',monospace;left:46.70px;transform:scaleX(0.7660);transform-origin:0 0;">28.02.2022</div>
<div class="t" style="top:711.76px;font-size:17.59px;color:#404040;left:156.00px;transform:scaleX(0.9534);transform-origin:0 0;">Факт</div>
<div class="t" style="top:711.76px;font-size:17.59px;color:#404040;left:333.50px;transform:scaleX(1.0160);transform-origin:0 0;">90 421,69</div>
<div class="t" style="top:711.41px;font-size:18.00px;color:#404040;left:431.00px;">-</div>
<div class="t" style="top:711.76px;font-size:17.59px;color:#404040;left:597.00px;transform:scaleX(0.9723);transform-origin:0 0;">Гастрономия</div>
<div class="t" style="top:711.76px;font-size:17.59px;color:#404040;left:907.50px;transform:scaleX(0.9729);transform-origin:0 0;">01 г. Винница, ул. Набережная 13</div>
<div class="t" style="top:711.76px;font-size:17.59px;color:#404040;left:1253.80px;transform:scaleX(0.9383);transform-origin:0 0;">P&amp;L</div>
<div class="t" style="top:711.76px;font-size:17.59px;color:#404040;left:1442.80px;transform:scaleX(0.9765);transform-origin:0 0;">Маржинальный доход</div>
<div class="t" style="top:711.76px;font-size:17.59px;color:#404040;left:1685.80px;transform:scaleX(0.9765);transform-origin:0 0;">Маржинальный доход</div>
<div class="t" style="top:743.20px;font-size:19.58px;color:#404040;font-family:'Liberation Mono',monospace;left:46.70px;transform:scaleX(0.7660);transform-origin:0 0;">28.02.2022</div>
<div class="t" style="top:743.31px;font-size:17.59px;color:#404040;left:156.00px;transform:scaleX(0.9902);transform-origin:0 0;">Бюджет</div>
<div class="t" style="top:743.31px;font-size:17.59px;color:#404040;left:334.80px;">84 561,70</div>
<div class="t" style="top:742.96px;font-size:18.00px;color:#404040;left:431.00px;">-</div>
<div class="t" style="top:743.31px;font-size:17.59px;color:#404040;left:597.00px;transform:scaleX(0.9723);transform-origin:0 0;">Гастрономия</div>
<div class="t" style="top:743.31px;font-size:17.59px;color:#404040;left:907.50px;transform:scaleX(0.9729);transform-origin:0 0;">01 г. Винница, ул. Набережная 13</div>
<div class="t" style="top:743.31px;font-size:17.59px;color:#404040;left:1253.80px;transform:scaleX(0.9383);transform-origin:0 0;">P&amp;L</div>
<div class="t" style="top:743.31px;font-size:17.59px;color:#404040;left:1442.80px;transform:scaleX(0.9386);transform-origin:0 0;">% Рентабельность бизнеса</div>
<div class="t" style="top:743.31px;font-size:17.59px;color:#404040;left:1685.80px;transform:scaleX(0.9386);transform-origin:0 0;">% Рентабельность бизнеса</div>
<div class="t" style="top:774.75px;font-size:19.58px;color:#404040;font-family:'Liberation Mono',monospace;left:46.70px;transform:scaleX(0.7660);transform-origin:0 0;">28.02.2022</div>
<div class="t" style="top:774.86px;font-size:17.59px;color:#404040;left:156.00px;transform:scaleX(0.9902);transform-origin:0 0;">Бюджет</div>
<div class="t" style="top:774.86px;font-size:17.59px;color:#404040;left:334.80px;">84 561,70</div>
<div class="t" style="top:774.51px;font-size:18.00px;color:#404040;left:431.00px;">-</div>
<div class="t" style="top:774.86px;font-size:17.59px;color:#404040;left:597.00px;transform:scaleX(0.9723);transform-origin:0 0;">Гастрономия</div>
<div class="t" style="top:774.86px;font-size:17.59px;color:#404040;left:907.50px;transform:scaleX(0.9729);transform-origin:0 0;">01 г. Винница, ул. Набережная 13</div>
<div class="t" style="top:774.86px;font-size:17.59px;color:#404040;left:1253.80px;transform:scaleX(0.9383);transform-origin:0 0;">P&amp;L</div>
<div class="t" style="top:774.86px;font-size:17.59px;color:#404040;left:1442.80px;transform:scaleX(0.8670);transform-origin:0 0;">%EBITDA</div>
<div class="t" style="top:774.86px;font-size:17.59px;color:#404040;left:1685.80px;transform:scaleX(0.8670);transform-origin:0 0;">%EBITDA</div>
<div class="t" style="top:806.30px;font-size:19.58px;color:#404040;font-family:'Liberation Mono',monospace;left:46.70px;transform:scaleX(0.7660);transform-origin:0 0;">28.02.2022</div>
<div class="t" style="top:806.41px;font-size:17.59px;color:#404040;left:156.00px;transform:scaleX(0.9902);transform-origin:0 0;">Бюджет</div>
<div class="t" style="top:806.41px;font-size:17.59px;color:#404040;left:334.80px;">84 561,70</div>
<div class="t" style="top:806.06px;font-size:18.00px;color:#404040;left:431.00px;">-</div>
<div class="t" style="top:806.41px;font-size:17.59px;color:#404040;left:597.00px;transform:scaleX(0.9723);transform-origin:0 0;">Гастрономия</div>
<div class="t" style="top:806.41px;font-size:17.59px;color:#404040;left:907.50px;transform:scaleX(0.9729);transform-origin:0 0;">01 г. Винница, ул. Набережная 13</div>
<div class="t" style="top:806.41px;font-size:17.59px;color:#404040;left:1253.80px;transform:scaleX(0.9383);transform-origin:0 0;">P&amp;L</div>
<div class="t" style="top:806.41px;font-size:17.59px;color:#404040;left:1442.80px;transform:scaleX(0.8456);transform-origin:0 0;">EAT</div>
<div class="t" style="top:806.41px;font-size:17.59px;color:#404040;left:1685.80px;transform:scaleX(0.8456);transform-origin:0 0;">EAT</div>
<div class="t" style="top:837.85px;font-size:19.58px;color:#404040;font-family:'Liberation Mono',monospace;left:46.70px;transform:scaleX(0.7660);transform-origin:0 0;">28.02.2022</div>
<div class="t" style="top:837.96px;font-size:17.59px;color:#404040;left:156.00px;transform:scaleX(0.9902);transform-origin:0 0;">Бюджет</div>
<div class="t" style="top:837.96px;font-size:17.59px;color:#404040;left:334.80px;">84 561,70</div>
<div class="t" style="top:837.61px;font-size:18.00px;color:#404040;left:431.00px;">-</div>
<div class="t" style="top:837.96px;font-size:17.59px;color:#404040;left:597.00px;transform:scaleX(0.9723);transform-origin:0 0;">Гастрономия</div>
<div class="t" style="top:837.96px;font-size:17.59px;color:#404040;left:907.50px;transform:scaleX(0.9729);transform-origin:0 0;">01 г. Винница, ул. Набережная 13</div>
<div class="t" style="top:837.96px;font-size:17.59px;color:#404040;left:1253.80px;transform:scaleX(0.9383);transform-origin:0 0;">P&amp;L</div>
<div class="t" style="top:837.96px;font-size:17.59px;color:#404040;left:1442.80px;transform:scaleX(0.9815);transform-origin:0 0;">Опер.прибыль компании</div>
<div class="t" style="top:837.96px;font-size:17.59px;color:#404040;left:1685.80px;transform:scaleX(0.9815);transform-origin:0 0;">Опер.прибыль компании</div>
<div class="t" style="top:869.40px;font-size:19.58px;color:#404040;font-family:'Liberation Mono',monospace;left:46.70px;transform:scaleX(0.7660);transform-origin:0 0;">28.02.2022</div>
<div class="t" style="top:869.51px;font-size:17.59px;color:#404040;left:156.00px;transform:scaleX(0.9902);transform-origin:0 0;">Бюджет</div>
<div class="t" style="top:869.51px;font-size:17.59px;color:#404040;left:334.80px;">84 561,70</div>
<div class="t" style="top:869.16px;font-size:18.00px;color:#404040;left:431.00px;">-</div>
<div class="t" style="top:869.51px;font-size:17.59px;color:#404040;left:597.00px;transform:scaleX(0.9723);transform-origin:0 0;">Гастрономия</div>
<div class="t" style="top:869.51px;font-size:17.59px;color:#404040;left:907.50px;transform:scaleX(0.9729);transform-origin:0 0;">01 г. Винница, ул. Набережная 13</div>
<div class="t" style="top:869.51px;font-size:17.59px;color:#404040;left:1253.80px;transform:scaleX(0.9383);transform-origin:0 0;">P&amp;L</div>
<div class="t" style="top:869.51px;font-size:17.59px;color:#404040;left:1442.80px;transform:scaleX(0.8767);transform-origin:0 0;">EBIT</div>
<div class="t" style="top:869.51px;font-size:17.59px;color:#404040;left:1685.80px;transform:scaleX(0.8767);transform-origin:0 0;">EBIT</div>
<div class="t" style="top:900.95px;font-size:19.58px;color:#404040;font-family:'Liberation Mono',monospace;left:46.70px;transform:scaleX(0.7660);transform-origin:0 0;">28.02.2022</div>
<div class="t" style="top:901.06px;font-size:17.59px;color:#404040;left:156.00px;transform:scaleX(0.9902);transform-origin:0 0;">Бюджет</div>
<div class="t" style="top:901.06px;font-size:17.59px;color:#404040;left:334.80px;">84 561,70</div>
<div class="t" style="top:900.71px;font-size:18.00px;color:#404040;left:431.00px;">-</div>
<div class="t" style="top:901.06px;font-size:17.59px;color:#404040;left:597.00px;transform:scaleX(0.9723);transform-origin:0 0;">Гастрономия</div>
<div class="t" style="top:901.06px;font-size:17.59px;color:#404040;left:907.50px;transform:scaleX(0.9729);transform-origin:0 0;">01 г. Винница, ул. Набережная 13</div>
<div class="t" style="top:901.06px;font-size:17.59px;color:#404040;left:1253.80px;transform:scaleX(0.9383);transform-origin:0 0;">P&amp;L</div>
<div class="t" style="top:901.06px;font-size:17.59px;color:#404040;left:1442.80px;transform:scaleX(0.9087);transform-origin:0 0;">EBITDA</div>
<div class="t" style="top:901.06px;font-size:17.59px;color:#404040;left:1685.80px;transform:scaleX(0.9087);transform-origin:0 0;">EBITDA</div>
<div class="t" style="top:932.50px;font-size:19.58px;color:#404040;font-family:'Liberation Mono',monospace;left:46.70px;transform:scaleX(0.7660);transform-origin:0 0;">28.02.2022</div>
<div class="t" style="top:932.61px;font-size:17.59px;color:#404040;left:156.00px;transform:scaleX(0.9902);transform-origin:0 0;">Бюджет</div>
<div class="t" style="top:932.61px;font-size:17.59px;color:#404040;left:334.80px;">84 561,70</div>
<div class="t" style="top:932.26px;font-size:18.00px;color:#404040;left:431.00px;">-</div>
<div class="t" style="top:932.61px;font-size:17.59px;color:#404040;left:597.00px;transform:scaleX(0.9723);transform-origin:0 0;">Гастрономия</div>
<div class="t" style="top:932.61px;font-size:17.59px;color:#404040;left:907.50px;transform:scaleX(0.9729);transform-origin:0 0;">01 г. Винница, ул. Набережная 13</div>
<div class="t" style="top:932.61px;font-size:17.59px;color:#404040;left:1253.80px;transform:scaleX(0.9383);transform-origin:0 0;">P&amp;L</div>
<div class="t" style="top:932.61px;font-size:17.59px;color:#404040;left:1442.80px;transform:scaleX(0.8380);transform-origin:0 0;">EBT</div>
<div class="t" style="top:932.61px;font-size:17.59px;color:#404040;left:1685.80px;transform:scaleX(0.8380);transform-origin:0 0;">EBT</div>
<div class="t" style="top:964.05px;font-size:19.58px;color:#404040;font-family:'Liberation Mono',monospace;left:46.70px;transform:scaleX(0.7660);transform-origin:0 0;">28.02.2022</div>
<div class="t" style="top:964.16px;font-size:17.59px;color:#404040;left:156.00px;transform:scaleX(0.9902);transform-origin:0 0;">Бюджет</div>
<div class="t" style="top:964.16px;font-size:17.59px;color:#404040;left:334.80px;">84 561,70</div>
<div class="t" style="top:963.81px;font-size:18.00px;color:#404040;left:431.00px;">-</div>
<div class="t" style="top:964.16px;font-size:17.59px;color:#404040;left:597.00px;transform:scaleX(0.9723);transform-origin:0 0;">Гастрономия</div>
<div class="t" style="top:964.16px;font-size:17.59px;color:#404040;left:907.50px;transform:scaleX(0.9729);transform-origin:0 0;">01 г. Винница, ул. Набережная 13</div>
<div class="t" style="top:964.16px;font-size:17.59px;color:#404040;left:1253.80px;transform:scaleX(0.9383);transform-origin:0 0;">P&amp;L</div>
<div class="t" style="top:964.16px;font-size:17.59px;color:#404040;left:1442.80px;transform:scaleX(0.9514);transform-origin:0 0;">RE(Чистая прибыль)</div>
<div class="t" style="top:964.16px;font-size:17.59px;color:#404040;left:1685.80px;transform:scaleX(0.9514);transform-origin:0 0;">RE(Чистая прибыль)</div>
<div class="t" style="top:995.60px;font-size:19.58px;color:#404040;font-family:'Liberation Mono',monospace;left:46.70px;transform:scaleX(0.7660);transform-origin:0 0;">28.02.2022</div>
<div class="t" style="top:995.71px;font-size:17.59px;color:#404040;left:156.00px;transform:scaleX(0.9902);transform-origin:0 0;">Бюджет</div>
<div class="t" style="top:995.71px;font-size:17.59px;color:#404040;left:333.30px;transform:scaleX(1.0185);transform-origin:0 0;">84 338,30</div>
<div class="t" style="top:995.36px;font-size:18.00px;color:#404040;left:431.00px;">-</div>
<div class="t" style="top:995.71px;font-size:17.59px;color:#404040;left:597.00px;transform:scaleX(0.9723);transform-origin:0 0;">Гастрономия</div>
<div class="t" style="top:995.71px;font-size:17.59px;color:#404040;left:907.50px;transform:scaleX(0.9729);transform-origin:0 0;">01 г. Винница, ул. Набережная 13</div>
<div class="t" style="top:995.71px;font-size:17.59px;color:#404040;left:1253.80px;transform:scaleX(0.9383);transform-origin:0 0;">P&amp;L</div>
<div class="t" style="top:995.71px;font-size:17.59px;color:#404040;left:1442.80px;transform:scaleX(0.9736);transform-origin:0 0;">Опер.прибыль магазинов</div>
<div class="t" style="top:995.71px;font-size:17.59px;color:#404040;left:1685.80px;transform:scaleX(0.9736);transform-origin:0 0;">Опер.прибыль магазинов</div>
<div class="t" style="top:1027.15px;font-size:19.58px;color:#404040;font-family:'Liberation Mono',monospace;left:46.70px;transform:scaleX(0.7660);transform-origin:0 0;">28.02.2022</div>
<div class="t" style="top:1027.26px;font-size:17.59px;color:#404040;left:156.00px;transform:scaleX(0.9902);transform-origin:0 0;">Бюджет</div>
<div class="t" style="top:1027.26px;font-size:17.59px;color:#404040;left:333.30px;transform:scaleX(1.0185);transform-origin:0 0;">82 775,83</div>
<div class="t" style="top:1026.91px;font-size:18.00px;color:#404040;left:431.00px;">-</div>
<div class="t" style="top:1027.26px;font-size:17.59px;color:#404040;left:597.00px;transform:scaleX(0.9723);transform-origin:0 0;">Гастрономия</div>
<div class="t" style="top:1027.26px;font-size:17.59px;color:#404040;left:907.50px;transform:scaleX(0.9729);transform-origin:0 0;">01 г. Винница, ул. Набережная 13</div>
<div class="t" style="top:1027.26px;font-size:17.59px;color:#404040;left:1253.80px;transform:scaleX(0.9383);transform-origin:0 0;">P&amp;L</div>
<div class="t" style="top:1027.26px;font-size:17.59px;color:#404040;left:1442.80px;transform:scaleX(0.9497);transform-origin:0 0;">Валовый доход (ВД)</div>
<div class="t" style="top:1027.26px;font-size:17.59px;color:#404040;left:1685.80px;transform:scaleX(0.9497);transform-origin:0 0;">Валовый доход (ВД)</div>
<div class="t" style="top:1058.70px;font-size:19.58px;color:#404040;font-family:'Liberation Mono',monospace;left:46.70px;transform:scaleX(0.7660);transform-origin:0 0;">28.02.2022</div>
<div class="t" style="top:1058.81px;font-size:17.59px;color:#404040;left:156.00px;transform:scaleX(0.9902);transform-origin:0 0;">Бюджет</div>
<div class="t" style="top:1058.81px;font-size:17.59px;color:#404040;left:333.50px;transform:scaleX(1.0160);transform-origin:0 0;">81 154,48</div>
<div class="t" style="top:1058.46px;font-size:18.00px;color:#404040;left:431.00px;">-</div>
<div class="t" style="top:1058.81px;font-size:17.59px;color:#404040;left:597.00px;transform:scaleX(0.9723);transform-origin:0 0;">Гастрономия</div>
<div class="t" style="top:1058.81px;font-size:17.59px;color:#404040;left:907.50px;transform:scaleX(0.9729);transform-origin:0 0;">01 г. Винница, ул. Набережная 13</div>
<div class="t" style="top:1058.81px;font-size:17.59px;color:#404040;left:1253.80px;transform:scaleX(0.9383);transform-origin:0 0;">P&amp;L</div>
<div class="t" style="top:1058.81px;font-size:17.59px;color:#404040;left:1442.80px;transform:scaleX(0.9619);transform-origin:0 0;">%Рентабельность продаж</div>
<div class="t" style="top:1058.81px;font-size:17.59px;color:#404040;left:1685.80px;transform:scaleX(0.9619);transform-origin:0 0;">%Рентабельность продаж</div>
</div>
<div class="a" style="right:0;top:0;width:22px;height:100%;background:linear-gradient(to right,rgba(0,0,0,0),rgba(0,0,0,0.05))"></div>
<div class="a" style="left:16px;top:686px;width:1888px;height:22px;background:linear-gradient(to bottom,rgba(0,0,0,0),rgba(0,0,0,0.06))"></div>
</div>
</body></html>
